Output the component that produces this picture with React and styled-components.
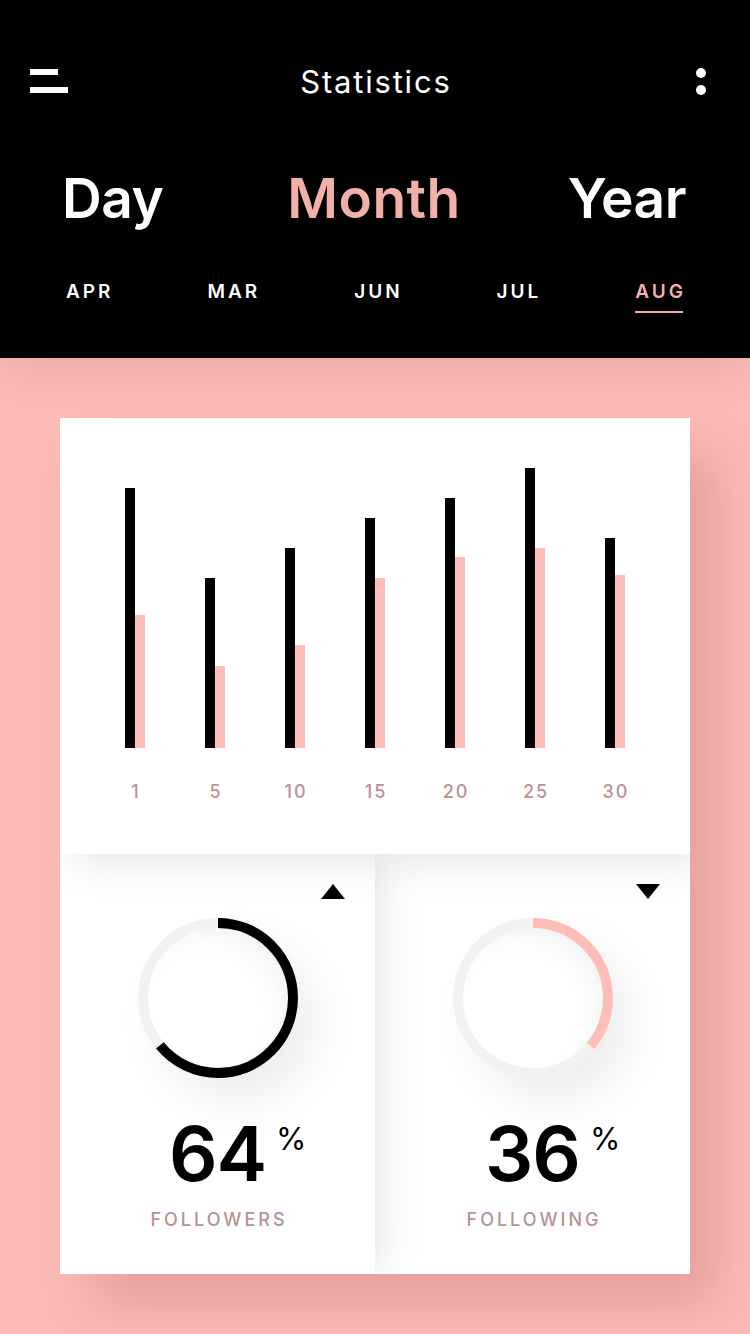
import React from 'react';
import styled, { createGlobalStyle } from 'styled-components';

const GlobalStyle = createGlobalStyle`
  html, body { margin: 0; padding: 0; background: #fcbbb7; }
  body { font-family: Inter, "Noto Sans", sans-serif; -webkit-font-smoothing: antialiased; }
  * { box-sizing: border-box; }
`;

const Screen = styled.div`
  width: 750px;
  min-height: 1334px;
  background: #fcbbb7;
  display: flex;
  flex-direction: column;
  overflow: hidden;
`;

const Header = styled.header`
  position: relative;
  z-index: 3;
  height: 358px;
  background: #000;
  box-shadow: 0 8px 45px rgba(110, 20, 20, 0.13);
  display: flex;
  flex-direction: column;
`;

const NavBar = styled.div`
  height: 162px;
  padding: 0 30px;
  display: grid;
  grid-template-columns: 1fr auto 1fr;
  align-items: center;
`;

const MenuIcon = styled.div`
  display: flex;
  flex-direction: column;
  gap: 12px;
  span {
    display: block;
    height: 6px;
    background: #fff;
  }
  span:first-child { width: 28px; }
  span:last-child { width: 38px; }
`;

const Title = styled.h1`
  margin: 0;
  color: #fff;
  font-size: 31px;
  font-weight: 400;
  letter-spacing: 1.8px;
  padding-left: 1.8px;
  line-height: 1;
`;

const MoreIcon = styled.div`
  justify-self: end;
  margin-right: 14px;
  display: flex;
  flex-direction: column;
  gap: 7px;
  span {
    width: 10px;
    height: 10px;
    border-radius: 50%;
    background: #fff;
  }
`;

const PeriodTabs = styled.div`
  margin-top: 9px;
  padding: 0 64px 0 62px;
  display: grid;
  grid-template-columns: 1fr auto 1fr;
  & > :first-child { justify-self: start; }
  & > :last-child { justify-self: end; }
`;

const Period = styled.span`
  font-size: 55px;
  font-weight: 600;
  line-height: 1;
  height: 56px;
  color: ${p => (p.$active ? '#f2b0ab' : '#fff')};
  letter-spacing: ${p => (p.$active ? '0.5px' : '-0.5px')};
`;

const MonthTabs = styled.div`
  margin-top: 55px;
  padding: 0 64px 0 66px;
  display: flex;
  justify-content: space-between;
`;

const MonthTab = styled.span`
  display: inline-flex;
  flex-direction: column;
  font-size: 19px;
  font-weight: 600;
  line-height: 1;
  letter-spacing: 3px;
  color: ${p => (p.$active ? '#f3b1ad' : '#fff')};
  &::after {
    content: '';
    display: block;
    height: 2px;
    width: calc(100% - 3px);
    margin-top: 10px;
    background: ${p => (p.$active ? '#f3b1ad' : 'transparent')};
  }
`;

const Main = styled.main`
  position: relative;
  z-index: 1;
  padding: 60px 60px 60px;
`;

const Card = styled.section`
  width: 630px;
  background: #fff;
  box-shadow: 30px 34px 50px rgba(130, 30, 30, 0.17);
  display: flex;
  flex-direction: column;
  overflow: hidden;
`;

const ChartSection = styled.div`
  position: relative;
  z-index: 3;
  height: 436px;
  background: #fff;
  padding-top: 50px;
  box-shadow: 12px 8px 40px rgba(0, 0, 0, 0.1);
`;

const BarGrid = styled.div`
  height: 280px;
  padding: 0 35px;
  display: grid;
  grid-template-columns: repeat(7, 80px);
`;

const BarGroup = styled.div`
  display: flex;
  justify-content: center;
  align-items: flex-end;
`;

const Bar = styled.div`
  width: 10px;
  background: ${p => (p.$tone === 'pink' ? '#ffbdb8' : '#000')};
`;

const AxisLabels = styled.div`
  margin-top: 35px;
  padding: 0 35px;
  display: grid;
  grid-template-columns: repeat(7, 80px);
`;

const AxisLabel = styled.span`
  text-align: center;
  font-size: 18px;
  font-weight: 500;
  line-height: 1;
  letter-spacing: 2px;
  padding-left: 2px;
  color: #bb928e;
`;

const Stats = styled.div`
  display: flex;
  height: 420px;
`;

const Panel = styled.div`
  position: relative;
  z-index: ${p => p.$layer};
  flex: 1;
  background: #fff;
  padding: 30px 30px 0;
  display: flex;
  flex-direction: column;
  align-items: center;
  box-shadow: ${p => (p.$layer > 1 ? '0 0 45px rgba(0,0,0,0.13)' : 'none')};
`;

const Trend = styled.div`
  align-self: flex-end;
  width: 0;
  height: 0;
  border-left: 12px solid transparent;
  border-right: 12px solid transparent;
  ${p =>
    p.$up
      ? 'border-bottom: 15px solid #000;'
      : 'border-top: 15px solid #000;'}
`;

const Ring = styled.div`
  margin-top: 19px;
  width: 160px;
  height: 160px;
  border-radius: 50%;
  box-shadow: 20px 24px 45px rgba(0, 0, 0, 0.07),
    inset -14px 16px 28px rgba(0, 0, 0, 0.05);
  svg { display: block; }
`;

const Value = styled.div`
  position: relative;
  margin-top: 37px;
  font-size: 76px;
  font-weight: 600;
  line-height: 1;
  letter-spacing: -1px;
  color: #000;
`;

const Percent = styled.span`
  position: absolute;
  left: calc(100% + 10px);
  top: 8px;
  font-size: 31px;
  font-weight: 400;
  line-height: 1;
  letter-spacing: 0;
`;

const Caption = styled.div`
  margin-top: 20px;
  font-size: 18px;
  font-weight: 500;
  line-height: 1;
  letter-spacing: 3px;
  padding-left: 3px;
  color: #b8928e;
`;

const months = ['APR', 'MAR', 'JUN', 'JUL', 'AUG'];
const chart = [
  { day: 1, dark: 260, pink: 133 },
  { day: 5, dark: 170, pink: 82 },
  { day: 10, dark: 200, pink: 103 },
  { day: 15, dark: 230, pink: 170 },
  { day: 20, dark: 250, pink: 191 },
  { day: 25, dark: 280, pink: 200 },
  { day: 30, dark: 210, pink: 173 },
];

function Donut({ value, color }) {
  const r = 75;
  const c = 2 * Math.PI * r;
  return (
    <Ring>
      <svg width="160" height="160" viewBox="0 0 160 160">
        <circle cx="80" cy="80" r={r} fill="none" stroke="#f2f2f2" strokeWidth="10" />
        <circle
          cx="80"
          cy="80"
          r={r}
          fill="none"
          stroke={color}
          strokeWidth="10"
          strokeDasharray={`${(c * value) / 100} ${c}`}
          transform="rotate(-90 80 80)"
        />
      </svg>
    </Ring>
  );
}

function StatPanel({ layer, up, value, color, label }) {
  return (
    <Panel $layer={layer}>
      <Trend $up={up} />
      <Donut value={value} color={color} />
      <Value>
        {value}
        <Percent>%</Percent>
      </Value>
      <Caption>{label}</Caption>
    </Panel>
  );
}

export default function App() {
  return (
    <Screen>
      <GlobalStyle />
      <Header>
        <NavBar>
          <MenuIcon>
            <span />
            <span />
          </MenuIcon>
          <Title>Statistics</Title>
          <MoreIcon>
            <span />
            <span />
          </MoreIcon>
        </NavBar>
        <PeriodTabs>
          <Period>Day</Period>
          <Period $active>Month</Period>
          <Period>Year</Period>
        </PeriodTabs>
        <MonthTabs>
          {months.map(m => (
            <MonthTab key={m} $active={m === 'AUG'}>
              {m}
            </MonthTab>
          ))}
        </MonthTabs>
      </Header>
      <Main>
        <Card>
          <ChartSection>
            <BarGrid>
              {chart.map(d => (
                <BarGroup key={d.day}>
                  <Bar style={{ height: d.dark }} />
                  <Bar $tone="pink" style={{ height: d.pink }} />
                </BarGroup>
              ))}
            </BarGrid>
            <AxisLabels>
              {chart.map(d => (
                <AxisLabel key={d.day}>{d.day}</AxisLabel>
              ))}
            </AxisLabels>
          </ChartSection>
          <Stats>
            <StatPanel layer={2} up value={64} color="#000" label="FOLLOWERS" />
            <StatPanel layer={1} value={36} color="#ffbdb8" label="FOLLOWING" />
          </Stats>
        </Card>
      </Main>
    </Screen>
  );
}
